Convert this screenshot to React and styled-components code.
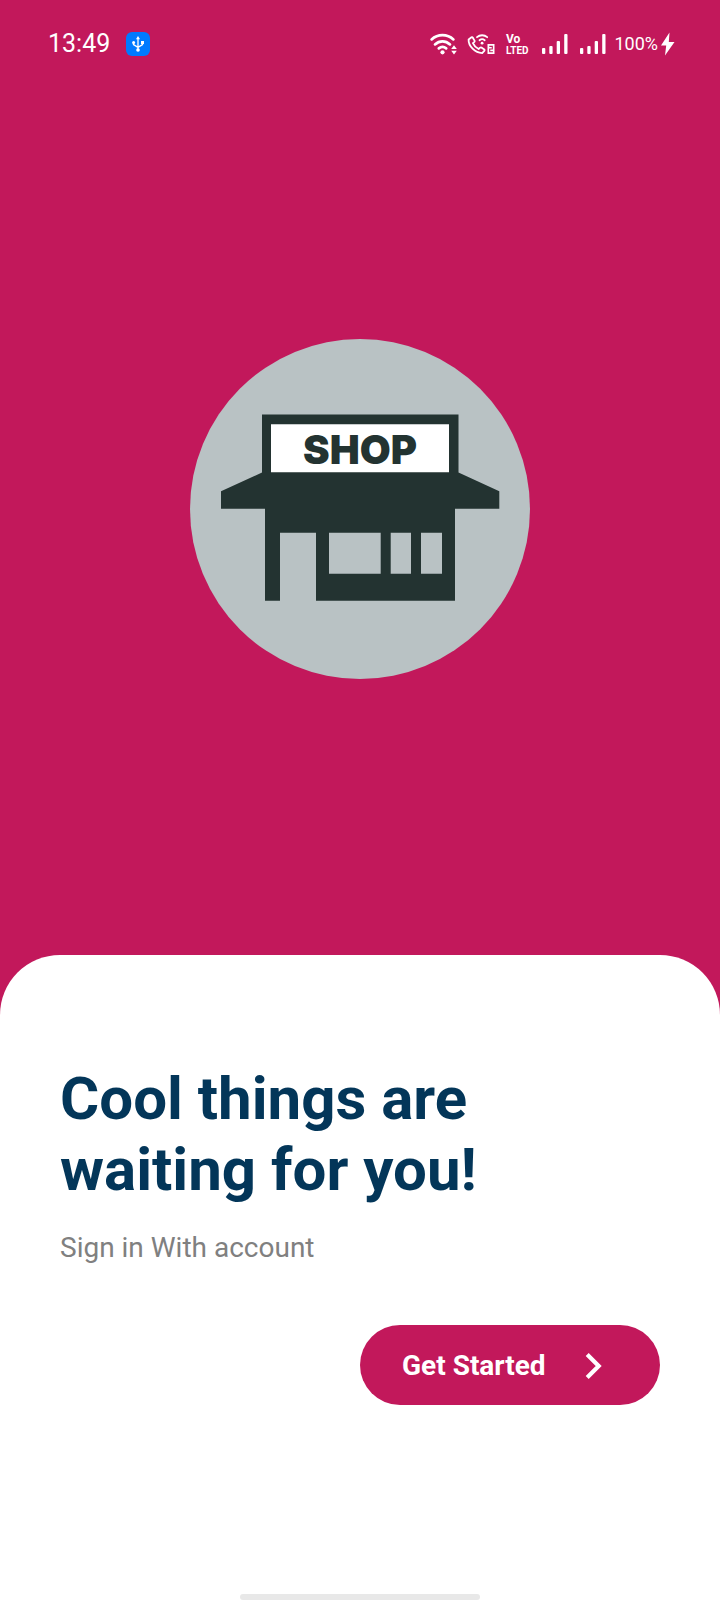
import React from "react";
import styled, { createGlobalStyle } from "styled-components";

const GlobalStyle = createGlobalStyle`
  *, *::before, *::after { box-sizing: border-box; }
  body {
    margin: 0;
    background: #c2185b;
    font-family: Roboto, "Liberation Sans", sans-serif;
  }
  h1, p { margin: 0; }
`;

const Screen = styled.div`
  min-height: 100vh;
  display: flex;
  flex-direction: column;
  background: #c2185b;
`;

const StatusBar = styled.header`
  display: flex;
  align-items: center;
  justify-content: space-between;
  height: 63px;
  padding: 25px 44px 0 48px;
  color: #fff;
`;

const StatusGroup = styled.div`
  display: flex;
  align-items: center;
  gap: ${({ $gap }) => $gap}px;
  svg { display: block; flex: none; }
`;

const Clock = styled.time`
  font-size: 25px;
  line-height: 32px;
`;

const Charge = styled.span`
  font-size: 18px;
  line-height: 24px;
`;

const UsbBadge = styled.span`
  display: grid;
  place-items: center;
  width: 24px;
  height: 24px;
  border-radius: 6px;
  background: #007aff;
`;

const Hero = styled.main`
  flex: 1;
  display: grid;
  place-items: center;
`;

const Logo = styled.svg`
  display: block;
  width: 340px;
  height: 340px;
`;

const Sheet = styled.section`
  display: flex;
  flex-direction: column;
  align-items: flex-start;
  padding: 108px 60px 0;
  border-radius: 60px 60px 0 0;
  background: #fff;
`;

const Title = styled.h1`
  max-width: 480px;
  font-size: 60px;
  line-height: 71px;
  font-weight: 700;
  color: #033659;
`;

const Subtitle = styled.p`
  margin-top: 26px;
  font-size: 28px;
  line-height: 34px;
  color: #808080;
`;

const StartButton = styled.button`
  align-self: flex-end;
  display: flex;
  align-items: center;
  gap: 28px;
  width: 50%;
  min-width: 300px;
  height: 80px;
  margin-top: 60px;
  padding: 2px 42px 0;
  border: 0;
  border-radius: 40px;
  background: #c2185b;
  color: #fff;
  font: 700 28px/32px Roboto, "Liberation Sans", sans-serif;
  cursor: pointer;
  svg { display: block; }
`;

const HomeIndicator = styled.div`
  align-self: center;
  width: 40%;
  height: 6px;
  margin-top: 189px;
  border-radius: 3px;
  background: #e8e8e8;
`;

function UsbIcon() {
  return (
    <svg width="14" height="18" viewBox="0 0 14 18" fill="none" stroke="#fff" strokeWidth="1.3">
      <path d="M7 3v12M2.5 8v1.6L7 12.4M11.5 8v1.6L7 12.4" />
      <path d="M7 1 9 4.2H5Z" fill="#fff" stroke="none" />
      <circle cx="7" cy="15" r="1.8" fill="#fff" stroke="none" />
      <circle cx="2.6" cy="7.6" r="1.5" fill="#fff" stroke="none" />
      <path d="M10 6h3v3h-3z" fill="#fff" stroke="none" />
    </svg>
  );
}

function WifiIcon() {
  return (
    <svg width="28" height="24" viewBox="0 0 28 24" fill="none" stroke="currentColor" strokeWidth="2.7" strokeLinecap="round">
      <path d="M2.6 7.4C8.800 1.800 18.200 1.800 24.400 7.400" />
      <path d="M6 12.4c4.400-4 10.600-4 15 0" />
      <path d="M9.800 16.400c2.200-1.800 5.200-1.800 7.400 0" />
      <circle cx="13.500" cy="20.300" r="2.100" fill="currentColor" stroke="none" />
      <path d="M22.200 17 25 13.200l2.800 3.800ZM22.200 18.800l2.800 3.800 2.800-3.800Z" fill="currentColor" stroke="none" />
    </svg>
  );
}

function WifiCallIcon() {
  return (
    <svg width="28" height="24" viewBox="0 0 28 24" fill="none" stroke="currentColor" strokeWidth="1.8" strokeLinecap="round" strokeLinejoin="round">
      <path d="M4.500 5.300 1.600 7.500C1.300 14 8 20.900 15.200 21.100l2.300-2.500c.2-.4.1-.8-.2-1.100l-2.900-2c-.4-.2-.8-.2-1.200.1l-1.600 1.400c-2.500-1.200-4.600-3.300-5.700-5.800l1.500-1.400c.3-.3.4-.8.1-1.200L5.700 5.500c-.3-.4-.8-.5-1.200-.2Z" />
      <path d="M10 5.200c2.900-2.600 7.300-2.600 10.200 0M12.500 8.200c1.500-1.200 3.700-1.200 5.200 0" />
      <circle cx="15.100" cy="11.200" r="1.400" fill="currentColor" stroke="none" />
      <path d="M20.500 12h7v10h-7z" fill="currentColor" stroke="none" />
      <path d="M22.300 14.400h3v2.600h-2.600v2.700h3.200" stroke="#c2185b" strokeWidth="1.100" strokeLinecap="butt" strokeLinejoin="miter" />
    </svg>
  );
}

function VolteIcon() {
  return (
    <svg width="26" height="24" viewBox="0 0 26 24" fill="currentColor" fontFamily="Roboto, sans-serif" fontWeight="700">
      <text x="1" y="11" fontSize="12">Vo</text>
      <text x="1" y="22" fontSize="10">LTED</text>
    </svg>
  );
}

function SignalIcon() {
  return (
    <svg width="28" height="24" viewBox="0 0 28 24" fill="currentColor">
      <rect x="1" y="16" width="3.300" height="6" rx="1" />
      <rect x="8.300" y="14" width="3.300" height="8" rx="1" />
      <rect x="15.700" y="9" width="3.300" height="13" rx="1" />
      <rect x="23.200" y="2" width="3.300" height="20" rx="1" />
    </svg>
  );
}

function BoltIcon() {
  return (
    <svg width="16" height="24" viewBox="0 0 16 24" fill="currentColor">
      <path d="M9.500 0.500 1 13.500h5.200L5 23.500 14.500 10H8.800Z" />
    </svg>
  );
}

function ChevronIcon() {
  return (
    <svg width="40" height="40" viewBox="0 0 40 40" fill="none" stroke="currentColor" strokeWidth="4.200" aria-hidden="true">
      <path d="m13.200 8.500 11.500 11.500-11.500 11.500" />
    </svg>
  );
}

function ShopLogo() {
  return (
    <Logo viewBox="0 0 340 340" role="img" aria-label="Shop">
      <circle cx="170" cy="170" r="170" fill="#b9c2c4" />
      <path
        fill="#233331"
        fillRule="evenodd"
        d="M72 75.500H268.500V133.500L309.300 152.300V169.700H265V261.700H126V193.700H90V261.700H75V169.700H31V152.300L72 133.500ZM139 193.700V234.700H190.700V193.700ZM200.700 193.700V234.700H221V193.700ZM231 193.700V234.700H252V193.700Z"
      />
      <path fill="#fff" d="M81 85.300h178v48H81z" />
      <text x="170" y="125" textAnchor="middle" fill="#233331" fontFamily="Inter, sans-serif" fontSize="40" fontWeight="900">
        SHOP
      </text>
    </Logo>
  );
}

export default function App() {
  return (
    <Screen>
      <GlobalStyle />
      <StatusBar>
        <StatusGroup $gap={16}>
          <Clock>13:49</Clock>
          <UsbBadge><UsbIcon /></UsbBadge>
        </StatusGroup>
        <StatusGroup $gap={7}>
          <StatusGroup $gap={10}>
            <WifiIcon />
            <WifiCallIcon />
            <VolteIcon />
            <SignalIcon />
            <SignalIcon />
          </StatusGroup>
          <StatusGroup $gap={2}>
            <Charge>100%</Charge>
            <BoltIcon />
          </StatusGroup>
        </StatusGroup>
      </StatusBar>
      <Hero>
        <ShopLogo />
      </Hero>
      <Sheet>
        <Title>Cool things are waiting for you!</Title>
        <Subtitle>Sign in With account</Subtitle>
        <StartButton type="button">
          Get Started
          <ChevronIcon />
        </StartButton>
        <HomeIndicator />
      </Sheet>
    </Screen>
  );
}
